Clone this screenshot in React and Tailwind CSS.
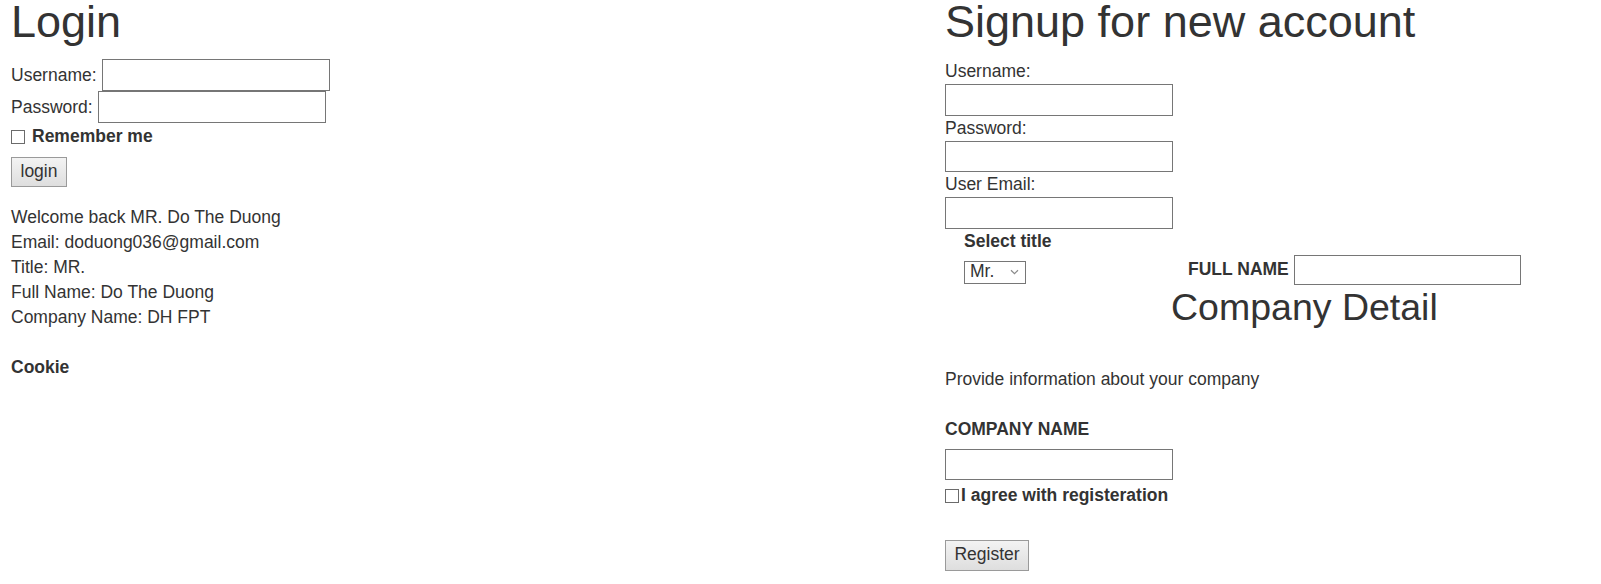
import React from 'react';

function TextBox({ className = '' }) {
  return <input type="text" className={`block border border-[#767676] bg-white outline-none ${className}`} />;
}

function Check() {
  return <span className="inline-block w-[14px] h-[14px] border border-[#6b6b6b] bg-white shrink-0" />;
}

function Btn({ children, className = '' }) {
  return (
    <button className={`border border-[#9a9a9a] bg-gradient-to-b from-[#f3f3f3] to-[#dedede] text-[#333] leading-none ${className}`}>
      {children}
    </button>
  );
}

export default function App() {
  return (
    <div className="flex w-[1601px] h-[584px] bg-white text-[#333] text-[17.5px] leading-[25px] font-['Liberation_Sans',Arial,sans-serif] overflow-hidden">
      {/* login side */}
      <div className="w-[945px] shrink-0 pl-[11px]">
        <h1 className="text-[45px] leading-[43px] font-normal">Login</h1>
        <div className="mt-[16px] flex items-center h-[32px]">
          <span className="mr-[5px]">Username:</span>
          <TextBox className="w-[228px] h-[32px]" />
        </div>
        <div className="flex items-center h-[32px]">
          <span className="mr-[5px]">Password:</span>
          <TextBox className="w-[228px] h-[32px]" />
        </div>
        <div className="flex items-center h-[25px] mt-[1px]">
          <Check />
          <span className="ml-[7px] font-bold">Remember me</span>
        </div>
        <Btn className="mt-[8px] w-[56px] h-[30px]">login</Btn>
        <div className="mt-[18px]">
          <div>Welcome back MR. Do The Duong</div>
          <div>Email: doduong036@gmail.com</div>
          <div>Title: MR.</div>
          <div>Full Name: Do The Duong</div>
          <div>Company Name: DH FPT</div>
          <div className="h-[25px]" />
          <div className="font-bold">Cookie</div>
        </div>
      </div>

      {/* signup side */}
      <div className="flex-1">
        <h1 className="text-[45px] leading-[43px] font-normal">Signup for new account</h1>
        <div className="mt-[16px] h-[25px]">Username:</div>
        <TextBox className="w-[228px] h-[31.5px]" />
        <div className="h-[25px]">Password:</div>
        <TextBox className="w-[228px] h-[31.5px]" />
        <div className="h-[25px]">User Email:</div>
        <TextBox className="w-[228px] h-[31.5px]" />

        <div className="flex">
          <div className="w-[243px] pl-[19px]">
            <div className="font-bold h-[25px]">Select title</div>
            <div className="mt-[7px] flex items-center justify-between w-[62px] h-[23px] border border-[#767676] pl-[5px] pr-[6px]">
              <span className="leading-none">Mr.</span>
              <svg width="9" height="6" viewBox="0 0 9 6" fill="none" stroke="#8a8a8a" strokeWidth="1.2">
                <path d="M1 1.2 L4.5 4.6 L8 1.2" />
              </svg>
            </div>
          </div>
          <div className="mt-[26px] flex items-center h-[30px]">
            <span className="font-bold mr-[5px]">FULL NAME</span>
            <TextBox className="w-[227px] h-[30px]" />
          </div>
        </div>

        <h2 className="ml-[226px] mt-[2.5px] text-[37.5px] leading-[41px] font-normal">Company Detail</h2>
        <p className="mt-[39px]">Provide information about your company</p>
        <div className="mt-[25px] font-bold">COMPANY NAME</div>
        <TextBox className="mt-[6.5px] w-[228px] h-[31.5px]" />
        <div className="flex items-center h-[25px] mt-[3px]">
          <Check />
          <span className="ml-[2px] font-bold">I agree with registeration</span>
        </div>
        <Btn className="mt-[31.5px] w-[84px] h-[31px]">Register</Btn>
      </div>
    </div>
  );
}
